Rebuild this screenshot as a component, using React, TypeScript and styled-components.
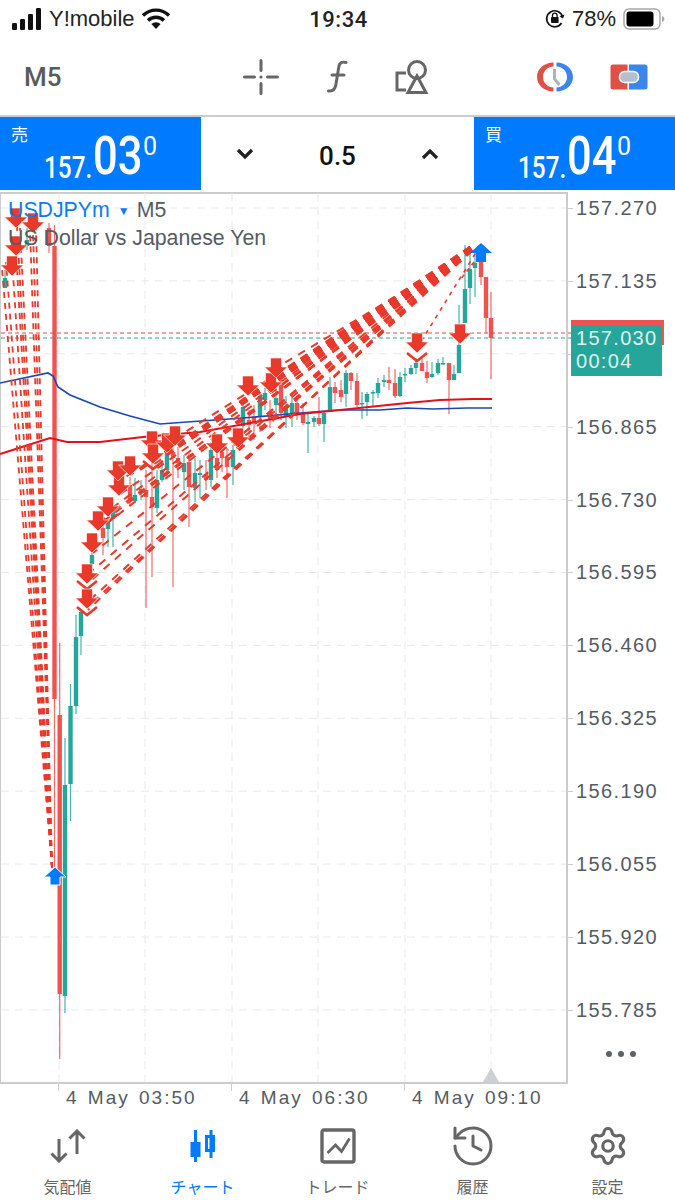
import React from "react";
import styled, { createGlobalStyle } from "styled-components";
import { History, Settings } from "lucide-react";

const GlobalStyle = createGlobalStyle`
  html, body { margin: 0; padding: 0; background: #fff; }
  body { font-family: "Liberation Sans", Arial, sans-serif; }
`;

const Screen = styled.div`
  width: 675px;
  height: 1200px;
  display: flex;
  flex-direction: column;
  overflow: hidden;
  background: #fff;
`;

/* status bar */
const StatusBar = styled.div`
  height: 38px;
  display: grid;
  grid-template-columns: 1fr 1fr 1fr;
  align-items: center;
  padding: 0 10px 0 12px;
  box-sizing: border-box;
  color: #222;
  font-size: 22px;
`;
const StatusLeft = styled.div`
  display: flex;
  align-items: center;
  gap: 7px;
`;
const Clock = styled.div`
  text-align: center;
  font-weight: 500;
  font-family: Roboto, sans-serif;
  font-size: 22px;
  letter-spacing: 0.5px;
`;
const StatusRight = styled.div`
  display: flex;
  align-items: center;
  justify-content: flex-end;
  gap: 7px;
`;

/* toolbar */
const Toolbar = styled.div`
  height: 79px;
  display: flex;
  align-items: center;
  padding-left: 24px;
  box-sizing: border-box;
  border-bottom: 2px solid #ccc;
`;
const Period = styled.div`
  width: 218px;
  color: #5a5a5a;
  font: 500 26px Roboto, sans-serif;
`;
const ToolSlot = styled.div<{ $ml: number }>`
  width: 38px;
  height: 44px;
  margin-left: ${(p) => p.$ml}px;
  display: flex;
  align-items: center;
  justify-content: center;
`;

/* quote panel */
const QuoteRow = styled.div`
  height: 73px;
  display: grid;
  grid-template-columns: 201px 1fr 201px;
  margin-bottom: 2px;
`;
const QuoteBox = styled.div`
  position: relative;
  background: #007aff;
  color: #fff;
  overflow: hidden;
  display: flex;
  align-items: flex-end;
  justify-content: center;
`;
const QuoteSide = styled.span`
  position: absolute;
  left: 11px;
  top: 7px;
  font: 17px "Noto Sans CJK JP", sans-serif;
  line-height: 20px;
`;
const QuotePrice = styled.div`
  display: flex;
  align-items: flex-start;
  height: 60px;
  font-family: Roboto, sans-serif;
`;
const QuoteSmall = styled.span`
  font-size: 32px;
  font-weight: 500;
  line-height: 32px;
  margin-top: 21px;
  display: inline-block;
  width: 49px;
  transform: scaleX(0.76);
  transform-origin: left top;
  white-space: nowrap;
`;
const QuoteBig = styled.span`
  font-size: 53px;
  line-height: 53px;
  font-weight: 500;
  display: inline-block;
  width: 50px;
  transform: scaleX(0.82);
  transform-origin: left top;
  white-space: nowrap;
`;
const QuoteSup = styled.span`
  font-size: 25px;
  line-height: 25px;
  margin-top: 4px;
`;
const Stepper = styled.div`
  display: flex;
  align-items: center;
  justify-content: space-between;
  padding: 0 35px;
  color: #111;
`;
const StepValue = styled.span`
  font: 500 26px Roboto, sans-serif;
  padding-top: 4px;
`;

/* chart */
const ChartRow = styled.div`
  position: relative;
  height: 892px;
  display: flex;
`;
const Plot = styled.div`
  position: relative;
  width: 568px;
  height: 892px;
  box-sizing: border-box;
  border: 2px solid #ccc;
  border-left-width: 1px;
  flex: none;
`;
const PlotSvg = styled.svg`
  display: block;
  overflow: visible;
  position: absolute;
  left: -1px;
  top: -2px;
`;
const Legend = styled.div`
  position: absolute;
  left: 7px;
  top: 3px;
  color: #555b63;
  font-size: 21.3px;
  line-height: 27px;
`;
const Symbol = styled.span`
  color: #0a7cf2;
`;
const LegendCaret = styled.span`
  color: #0a7cf2;
  font-size: 12px;
  margin: 0 7px 0 8px;
  vertical-align: 2px;
`;
const PriceAxis = styled.div`
  flex: 1;
  display: flex;
  flex-direction: column;
  gap: 48.9px;
  padding-top: 4px;
  font: 20px "Liberation Sans", sans-serif;
  letter-spacing: 1.4px;
  color: #555b63;
`;
const PriceLabel = styled.div`
  position: relative;
  height: 24px;
  line-height: 24px;
  padding-left: 8px;
  &::before {
    content: "";
    position: absolute;
    left: 0;
    top: 12px;
    width: 5px;
    height: 1px;
    background: #ccc;
  }
`;
const Dots = styled.div`
  display: flex;
  gap: 6px;
  padding-left: 38px;
  margin-top: -20px;
`;
const Dot = styled.span`
  width: 6px;
  height: 6px;
  border-radius: 50%;
  background: #5d6268;
`;
const Tag = styled.div<{ $bg: string; $top: number; $w: number; $h: number }>`
  position: absolute;
  left: 571px;
  top: ${(p) => p.$top}px;
  width: ${(p) => p.$w}px;
  height: ${(p) => p.$h}px;
  background: ${(p) => p.$bg};
  box-sizing: border-box;
  padding: 2px 0 0 5px;
  color: #dff3ef;
  font: 20px/23px "Liberation Sans", sans-serif;
  letter-spacing: 1.3px;
`;

/* time axis */
const TimeAxis = styled.div`
  height: 38px;
  display: flex;
  padding-left: 58px;
  color: #555b63;
  font: 19px "Liberation Sans", sans-serif;
  letter-spacing: 2px;
  word-spacing: 2px;
`;
const TimeLabel = styled.div`
  position: relative;
  width: 173px;
  padding: 3px 0 0 8px;
  box-sizing: border-box;
  white-space: nowrap;
  line-height: 22px;
  &::before {
    content: "";
    position: absolute;
    left: 0;
    top: 0;
    width: 1px;
    height: 7px;
    background: #ccc;
  }
`;

/* bottom tabs */
const TabBar = styled.div`
  flex: 1;
  display: grid;
  grid-template-columns: repeat(5, 1fr);
`;
const Tab = styled.div<{ $active?: boolean }>`
  display: flex;
  flex-direction: column;
  align-items: center;
  color: ${(p) => (p.$active ? "#007aff" : "#666")};
`;
const TabIcon = styled.div`
  height: 48px;
  display: flex;
  align-items: center;
  justify-content: center;
`;
const TabLabel = styled.div`
  font: 16px/22px "Noto Sans CJK JP", sans-serif;
  margin-top: 5px;
`;

/* chart data, page pixel coordinates. x, body top, body bottom, high, low */
type Candle = [number, number, number, number, number, "r" | "g"];
const candles: Candle[] = [
  [5, 278, 288, 270, 288, "g"],
  [27, 240, 246, 228, 250, "g"],
  [49, 228, 246, 223, 253, "r"],
  [54.5, 246, 699, 225, 877, "r"],
  [59.7, 715, 994, 643, 1059, "r"],
  [65, 785, 996, 738, 1013, "g"],
  [70.5, 706, 784, 684, 821, "g"],
  [76, 637, 706, 615, 714, "g"],
  [81, 612, 636, 611, 655, "g"],
  [92, 555, 564, 553, 566, "g"],
  [103, 528, 538, 520, 555, "r"],
  [108, 520, 529, 515, 547, "g"],
  [113, 510, 519, 505, 547, "g"],
  [130, 485, 500, 477, 506, "r"],
  [135, 495, 501, 478, 502, "g"],
  [141, 489, 493, 480, 500, "g"],
  [146, 490, 497, 470, 608, "r"],
  [152, 497, 507, 453, 577, "r"],
  [157, 480, 508, 470, 513, "g"],
  [162, 470, 480, 462, 482, "g"],
  [167, 450, 470, 440, 478, "g"],
  [173, 452, 458, 448, 587, "r"],
  [178, 458, 463, 447, 478, "r"],
  [184, 463, 472, 455, 490, "g"],
  [189, 462, 487, 453, 527, "r"],
  [195, 473, 488, 458, 502, "g"],
  [200, 473, 475, 460, 498, "g"],
  [206, 474, 480, 460, 490, "r"],
  [211, 450, 480, 442, 487, "g"],
  [217, 458, 470, 445, 478, "r"],
  [222, 452, 458, 450, 472, "r"],
  [227, 457, 467, 448, 498, "r"],
  [233, 450, 467, 445, 485, "g"],
  [243, 407, 426, 400, 430, "g"],
  [249, 420, 425, 410, 438, "r"],
  [254, 417, 422, 405, 440, "r"],
  [260, 396, 417, 392, 432, "g"],
  [265, 393, 400, 388, 410, "g"],
  [270, 412, 420, 400, 428, "r"],
  [276, 398, 405, 390, 420, "g"],
  [281, 385, 413, 380, 420, "r"],
  [286, 408, 416, 396, 428, "g"],
  [292, 403, 413, 394, 427, "g"],
  [297, 403, 415, 398, 420, "r"],
  [303, 413, 423, 403, 425, "r"],
  [308, 422, 424, 413, 453, "g"],
  [314, 418, 422, 416, 427, "g"],
  [319, 418, 424, 397, 426, "r"],
  [324, 413, 424, 411, 442, "g"],
  [330, 387, 412, 377, 412, "g"],
  [335, 387, 393, 382, 403, "r"],
  [341, 390, 397, 380, 402, "r"],
  [346, 373, 394, 370, 407, "g"],
  [351, 373, 381, 372, 390, "r"],
  [357, 381, 405, 373, 407, "r"],
  [362, 403, 404, 392, 419, "g"],
  [367, 394, 402, 392, 416, "g"],
  [373, 392, 393, 390, 407, "g"],
  [378, 383, 393, 378, 398, "g"],
  [384, 380, 382, 375, 387, "g"],
  [389, 380, 383, 367, 390, "r"],
  [395, 383, 396, 369, 398, "r"],
  [400, 377, 396, 372, 397, "g"],
  [405, 374, 375, 368, 382, "g"],
  [411, 368, 374, 365, 375, "g"],
  [416, 363, 368, 358, 374, "g"],
  [422, 363, 371, 357, 371, "r"],
  [427, 372, 378, 361, 383, "r"],
  [432, 374, 377, 362, 378, "g"],
  [438, 363, 373, 359, 375, "g"],
  [443, 363, 364, 357, 365, "g"],
  [449, 363, 380, 363, 414, "r"],
  [454, 374, 380, 365, 380, "g"],
  [459, 345, 373, 305, 373, "g"],
  [465, 289, 323, 245, 323, "g"],
  [470, 269, 288, 254, 304, "g"],
  [475, 263, 268, 253, 297, "g"],
  [481, 262, 277, 262, 285, "r"],
  [486, 277, 318, 277, 333, "r"],
  [491, 318, 338, 292, 379, "r"],
];

const blueMa = "0,383 48,373 53,376 58,387 70,395 100,407 130,416 160,424 187,422 243,418 300,413 340,410 380,410 407,408 433,409 467,408 492,408";
const redMa = "0,454 25,446 50,438 67,442 100,442 143,437 200,432 267,420 300,414 340,410 407,403 440,400 473,399 492,399";

// entries of the closed trades, x and y at the tip of the arrow
const rightEntries: [number, number][] = [
  [88, 610], [91, 604], [90, 600], [88, 583], [93, 570], [93, 553], [98, 530], [105, 520], [108, 515], [112, 508],
  [119, 495], [118, 482], [130, 475], [140, 470], [152, 453], [153, 465], [160, 460], [167, 453], [175, 446], [190, 440],
  [205, 445], [217, 455], [228, 450], [238, 449], [248, 397], [250, 392], [256, 392], [262, 388], [271, 393], [268, 380],
  [276, 378], [272, 385], [276, 368], [280, 372],
];
const leftEntries: [number, number][] = [
  [2, 268], [6, 262], [13, 274], [16, 252], [17, 226], [20, 228], [30, 230], [33, 232], [36, 228],
];
const downArrows: [number, number][] = [
  [16, 217], [33, 222], [16, 245], [12, 265], [87, 598], [87, 573], [92, 542], [98, 520], [108, 506], [119, 485],
  [118, 470], [130, 465], [152, 440], [153, 453], [167, 442], [175, 435], [217, 443], [238, 437], [248, 385], [271, 382],
  [276, 367], [417, 342], [460, 333],
];
const chevrons: [number, number][] = [[87, 611], [87, 585], [417, 357], [153, 465], [108, 518]];

const gridY = Array.from({ length: 12 }, (_, i) => 208 + i * 72.9);
const gridX = [59, 145, 232, 318, 405, 491];
const prices = ["157.270", "157.135", "157.000", "156.865", "156.730", "156.595", "156.460", "156.325", "156.190", "156.055", "155.920", "155.785"];

const RED = "#e8392b";

const DownArrow = ({ x, y }: { x: number; y: number }) => (
  <path d={`M${x - 5.5} ${y - 9}h11v9h6l-11.500 11l-11.500-11h6z`} fill={RED} stroke="#fff" strokeWidth={0.6} />
);

const ChartDrawing = () => (
  <PlotSvg width={568} height={892} viewBox="0 192 568 892">
    {gridY.map((y) => (
      <line key={y} x1={1} x2={566} y1={y} y2={y} stroke="#e6e9ed" strokeDasharray="8 6" />
    ))}
    {gridX.map((x) => (
      <line key={x} x1={x} x2={x} y1={193} y2={1082} stroke="#e6e9ed" strokeDasharray="8 6" />
    ))}
    {candles.map(([x, top, bottom, hi, lo, side]) => {
      const color = side === "r" ? "#ef5350" : "#26a69a";
      return (
        <g key={x}>
          <line x1={x} x2={x} y1={hi} y2={lo} stroke={color} strokeWidth={1.2} opacity={0.85} />
          <rect x={x - 2.2} y={top} width={4.4} height={Math.max(bottom - top, 1.5)} fill={color} />
        </g>
      );
    })}
    <polyline points={blueMa} fill="none" stroke="#1a47b8" strokeWidth={1.7} />
    <polyline points={redMa} fill="none" stroke="#e3101c" strokeWidth={1.9} />
    <line x1={1} x2={571} y1={333} y2={333} stroke="#e0493f" strokeWidth={1.1} strokeDasharray="4 3" />
    <line x1={1} x2={571} y1={338} y2={338} stroke="#26a69a" strokeWidth={1.1} strokeDasharray="4 3" />
    {/* the ends are shifted across the line, not along it, so the dashes stay in step */}
    {rightEntries.map(([x, y], i) => (
      <line
        key={`${x}-${y}`}
        x1={470 + (i % 3) * 1.2}
        y1={247 + (i % 3) * 1.8}
        x2={x}
        y2={y}
        stroke={RED}
        strokeWidth={2}
        strokeDasharray="8 7"
      />
    ))}
    <line x1={480} y1={246} x2={417} y2={348} stroke={RED} strokeWidth={1.6} strokeDasharray="4 5" />
    <line x1={474} y1={262} x2={460} y2={280} stroke={RED} strokeWidth={1.6} strokeDasharray="4 4" />
    {leftEntries.map(([x, y]) => (
      <line key={`${x}-${y}`} x1={52} y1={868} x2={x} y2={y} stroke={RED} strokeWidth={1.8} strokeDasharray="6 5" />
    ))}
    {chevrons.map(([x, y]) => (
      <path key={`${x}-${y}`} d={`M${x - 10} ${y - 4}l10 8l10-8`} fill="none" stroke={RED} strokeWidth={2.6} />
    ))}
    {downArrows.map(([x, y]) => (
      <DownArrow key={`${x}-${y}`} x={x} y={y} />
    ))}
    <path d="M55 867l11 10h-6v8h-10v-8h-6z" fill="#007aff" stroke="#fff" strokeWidth={1} />
    <path d="M481 243l11 10h-6v9h-10v-9h-6z" fill="#007aff" />
    <path d="M491 1068l8 14h-16z" fill="#ccd0d4" />
  </PlotSvg>
);

const SignalIcon = () => (
  <svg width="30" height="22" viewBox="0 0 30 22">
    <rect x="0" y="15" width="5" height="7" rx="1.2" fill="#111" />
    <rect x="8" y="11" width="5" height="11" rx="1.2" fill="#111" />
    <rect x="16" y="6" width="5" height="16" rx="1.2" fill="#111" />
    <rect x="24" y="0" width="5" height="22" rx="1.2" fill="#111" />
  </svg>
);

const WifiIcon = () => (
  <svg width="28" height="22" viewBox="0 0 28 22">
    <path d="M1 7.500a18.500 18.500 0 0 1 26 0" fill="none" stroke="#111" strokeWidth="3.4" />
    <path d="M6 12.500a11.500 11.500 0 0 1 16 0" fill="none" stroke="#111" strokeWidth="3.4" />
    <path d="M14 21l-4.600-5a6.600 6.600 0 0 1 9.200 0z" fill="#111" />
  </svg>
);

const OrientationLock = () => (
  <svg width="20" height="22" viewBox="0 0 20 22">
    <path d="M16.500 15a8 8 0 1 1 1-6" fill="none" stroke="#111" strokeWidth="1.7" />
    <path d="M14.500 8.500l3.500 2l1.500-4z" fill="#111" />
    <rect x="6" y="9" width="7.6" height="6" rx="1" fill="#111" />
    <path d="M7.500 9V7.500a2.300 2.300 0 0 1 4.600 0V9" fill="none" stroke="#111" strokeWidth="1.3" />
  </svg>
);

const BatteryIcon = () => (
  <svg width="42" height="22" viewBox="0 0 42 22">
    <rect x="1" y="1" width="36" height="20" rx="5" fill="none" stroke="#a8a8a8" strokeWidth="1.5" />
    <rect x="3.500" y="3.500" width="27" height="15" rx="3" fill="#000" />
    <path d="M39 8v6c1.600-.5 2.400-1.700 2.400-3S40.600 8.500 39 8z" fill="#a8a8a8" />
  </svg>
);

const CrosshairIcon = () => (
  <svg width="38" height="38" viewBox="0 0 38 38" fill="none" stroke="#666" strokeWidth="3" strokeLinecap="round">
    <path d="M2.500 19h10M25.500 19h10M19 2.500v10M19 25.500v10" />
    <circle cx="19" cy="19" r="1.600" fill="#666" stroke="none" />
  </svg>
);

const FunctionIcon = () => (
  <svg width="22" height="34" viewBox="0 0 22 34" fill="none" stroke="#666" strokeWidth="3" strokeLinecap="round">
    <path d="M20 2.500c-4.500-1.200-6.500 .5-7.200 4.500l-3 18c-.8 4.500-3 6.500-7.300 6" />
    <path d="M6 15h12" />
  </svg>
);

const ObjectsIcon = () => (
  <svg width="34" height="36" viewBox="0 0 34 36" fill="none" stroke="#666" strokeWidth="3">
    <circle cx="22" cy="11" r="8.500" />
    <path d="M22 17l9 16.500H13z" />
    <path d="M11 14H2v17h9" />
  </svg>
);

const PeriodIcon = () => (
  <svg width="38" height="32" viewBox="0 0 38 32" fill="none">
    <path d="M17.500 1.500C8 1.500 1 8 1 16s7 14.500 16.500 14.500v-4C12 26.500 7 22 7 16S12 5.500 17.500 5.500z" fill="#dd5147" />
    <path d="M20.500 1.500C30 1.500 37 8 37 16s-7 14.500-16.500 14.500v-4C26 26.500 31 22 31 16S26 5.500 20.500 5.500z" fill="#3b86ec" />
    <path d="M18.500 8v10l5 6" stroke="#a9b4bd" strokeWidth="3" />
  </svg>
);

const ToggleIcon = () => (
  <svg width="38" height="28" viewBox="0 0 38 28">
    <path d="M3 1.500h14.500v25H3A2.500 2.500 0 0 1 .5 24V4A2.500 2.500 0 0 1 3 1.500z" fill="#dd5147" />
    <path d="M19 1.500h16A2.500 2.500 0 0 1 37.500 4v20a2.500 2.500 0 0 1-2.500 2.500H19z" fill="#3b86ec" />
    <rect x="9.500" y="8.500" width="19" height="11" rx="5" fill="#b4c0ca" stroke="#fff" strokeWidth="1.500" />
  </svg>
);

const Chevron = ({ up }: { up?: boolean }) => (
  <svg width="18" height="12" viewBox="0 0 18 12" fill="none" stroke="#222" strokeWidth="3.200">
    <path d={up ? "M2 10l7-7l7 7" : "M2 2l7 7l7-7"} />
  </svg>
);

const QuotesIcon = () => (
  <svg width="38" height="34" viewBox="0 0 38 34" fill="none" stroke="currentColor" strokeWidth="3">
    <path d="M10 10v22M2.500 24.500l7.500 7.500l7.500-7.500" />
    <path d="M28 25V2M20.500 9.500l7.500-7.500l7.500 7.500" />
  </svg>
);

const CandlesIcon = () => (
  <svg width="26" height="34" viewBox="0 0 26 34" fill="currentColor">
    <rect x="4" y="1" width="3" height="32" />
    <rect x="0.500" y="13" width="10" height="15" />
    <rect x="19.500" y="1" width="3" height="28" />
    <rect x="16.500" y="7.500" width="7" height="14" fill="none" stroke="currentColor" strokeWidth="3" />
  </svg>
);

const TradeIcon = () => (
  <svg width="36" height="36" viewBox="0 0 36 36" fill="none" stroke="currentColor">
    <rect x="2" y="2" width="32" height="32" rx="2" strokeWidth="3.400" />
    <path d="M7.500 25l8-8l6 6.500l8-13" strokeWidth="2.800" />
  </svg>
);

export default function App() {
  return (
    <Screen>
      <GlobalStyle />
      <StatusBar>
        <StatusLeft>
          <SignalIcon />
          <span>Y!mobile</span>
          <WifiIcon />
        </StatusLeft>
        <Clock>19:34</Clock>
        <StatusRight>
          <OrientationLock />
          <span>78%</span>
          <BatteryIcon />
        </StatusRight>
      </StatusBar>

      <Toolbar>
        <Period>M5</Period>
        <ToolSlot $ml={0}>
          <CrosshairIcon />
        </ToolSlot>
        <ToolSlot $ml={38}>
          <FunctionIcon />
        </ToolSlot>
        <ToolSlot $ml={37}>
          <ObjectsIcon />
        </ToolSlot>
        <ToolSlot $ml={105}>
          <PeriodIcon />
        </ToolSlot>
        <ToolSlot $ml={36}>
          <ToggleIcon />
        </ToolSlot>
      </Toolbar>

      <QuoteRow>
        <QuoteBox>
          <QuoteSide>売</QuoteSide>
          <QuotePrice>
            <QuoteSmall>157.</QuoteSmall>
            <QuoteBig>03</QuoteBig>
            <QuoteSup>0</QuoteSup>
          </QuotePrice>
        </QuoteBox>
        <Stepper>
          <Chevron />
          <StepValue>0.5</StepValue>
          <Chevron up />
        </Stepper>
        <QuoteBox>
          <QuoteSide>買</QuoteSide>
          <QuotePrice>
            <QuoteSmall>157.</QuoteSmall>
            <QuoteBig>04</QuoteBig>
            <QuoteSup>0</QuoteSup>
          </QuotePrice>
        </QuoteBox>
      </QuoteRow>

      <ChartRow>
        <Plot>
          <ChartDrawing />
          <Legend>
            <div>
              <Symbol>USDJPYm</Symbol>
              <LegendCaret>▼</LegendCaret>M5
            </div>
            <div>US Dollar vs Japanese Yen</div>
          </Legend>
        </Plot>
        <PriceAxis>
          {prices.map((price) => (
            <PriceLabel key={price}>{price}</PriceLabel>
          ))}
          <Dots>
            <Dot />
            <Dot />
            <Dot />
          </Dots>
        </PriceAxis>
        <Tag $bg="#ef5350" $top={128} $w={93} $h={25}>
          157.040
        </Tag>
        <Tag $bg="#26a69a" $top={133} $w={91} $h={51}>
          157.030
          <br />
          00:04
        </Tag>
      </ChartRow>

      <TimeAxis>
        <TimeLabel>4 May 03:50</TimeLabel>
        <TimeLabel>4 May 06:30</TimeLabel>
        <TimeLabel>4 May 09:10</TimeLabel>
      </TimeAxis>

      <TabBar>
        <Tab>
          <TabIcon>
            <QuotesIcon />
          </TabIcon>
          <TabLabel>気配値</TabLabel>
        </Tab>
        <Tab $active>
          <TabIcon>
            <CandlesIcon />
          </TabIcon>
          <TabLabel>チャート</TabLabel>
        </Tab>
        <Tab>
          <TabIcon>
            <TradeIcon />
          </TabIcon>
          <TabLabel>トレード</TabLabel>
        </Tab>
        <Tab>
          <TabIcon>
            <History size={48} strokeWidth={1.5} />
          </TabIcon>
          <TabLabel>履歴</TabLabel>
        </Tab>
        <Tab>
          <TabIcon>
            <Settings size={42} strokeWidth={1.8} />
          </TabIcon>
          <TabLabel>設定</TabLabel>
        </Tab>
      </TabBar>
    </Screen>
  );
}
